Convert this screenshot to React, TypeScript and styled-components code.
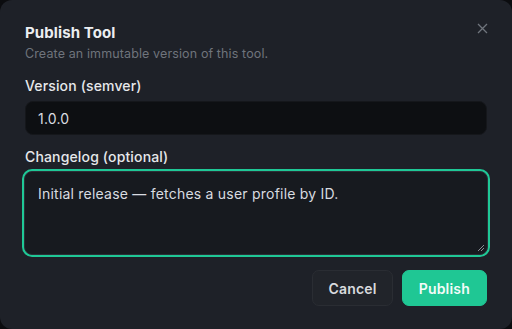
import React from "react";
import styled, { createGlobalStyle } from "styled-components";

const Global = createGlobalStyle`
  html, body { margin: 0; padding: 0; background: #0b0c0f; }
  body { font-family: Inter, "Noto Sans", sans-serif; -webkit-font-smoothing: antialiased; }
  * { box-sizing: border-box; }
`;

const Dialog = styled.div`
  position: relative;
  width: 512px;
  height: 329px;
  background: #1e2128;
  border-radius: 12px;
  padding: 22px 25px 24px 25px;
  display: flex;
  flex-direction: column;
`;

const Title = styled.h2`
  margin: 0;
  font-size: 15px;
  line-height: 22px;
  font-weight: 700;
  color: #eceef1;
  letter-spacing: 0.1px;
`;

const Subtitle = styled.p`
  margin: 1px 0 0;
  font-size: 12.5px;
  line-height: 18px;
  color: #6f747c;
  letter-spacing: 0.12px;
`;

const Close = styled.button`
  position: absolute;
  top: 20px;
  right: 22px;
  width: 16px;
  height: 16px;
  padding: 0;
  border: none;
  background: none;
  display: flex;
  align-items: center;
  justify-content: center;
`;

const Field = styled.div<{ $top: number }>`
  display: flex;
  flex-direction: column;
  margin-top: ${(p) => p.$top}px;
`;

const Label = styled.label`
  font-size: 14px;
  line-height: 20px;
  font-weight: 500;
  color: #e6e8eb;
  margin-bottom: 5px;
  letter-spacing: 0.15px;
`;

const Input = styled.div`
  height: 34px;
  border-radius: 8px;
  background: #0d0f12;
  border: 1px solid #15171b;
  padding: 0 12px;
  display: flex;
  align-items: center;
  font-size: 14px;
  color: #d9dce0;
  letter-spacing: 0.2px;
`;

const TextArea = styled.div`
  position: relative;
  margin: -1px -1px 0;
  height: 84px;
  border-radius: 8px;
  background: #171a1f;
  border: 1px solid #2b2f36;
  box-shadow: 0 0 0 2px #1fc896;
  padding: 11px 13px;
  font-size: 14px;
  line-height: 22px;
  color: #d9dce0;
  letter-spacing: 0.22px;
`;

const Grip = styled.svg`
  position: absolute;
  right: 2px;
  bottom: 2px;
`;

const Actions = styled.div`
  margin-top: 15px;
  display: flex;
  justify-content: flex-end;
  gap: 9px;
`;

const Button = styled.button<{ $primary?: boolean }>`
  height: 36px;
  padding: 0 ${(p) => (p.$primary ? 16 : 15)}px;
  border-radius: 7px;
  font-family: inherit;
  font-size: 14px;
  font-weight: 600;
  letter-spacing: 0.2px;
  color: ${(p) => (p.$primary ? "#f4fbf8" : "#d8dadd")};
  background: ${(p) => (p.$primary ? "#1fc794" : "#21242a")};
  border: 1px solid ${(p) => (p.$primary ? "#1fc794" : "#2a2d33")};
`;

export default function App() {
  return (
    <>
      <Global />
      <Dialog>
        <Title>Publish Tool</Title>
        <Subtitle>Create an immutable version of this tool.</Subtitle>
        <Close aria-label="Close">
          <svg width="11" height="11" viewBox="0 0 11 11">
            <path d="M1 1L10 10M10 1L1 10" stroke="#70757d" strokeWidth="1.3" />
          </svg>
        </Close>
        <Field $top={13}>
          <Label>Version (semver)</Label>
          <Input>1.0.0</Input>
        </Field>
        <Field $top={12}>
          <Label>Changelog (optional)</Label>
          <TextArea>
            Initial release — fetches a user profile by ID.
            <Grip width="8" height="8" viewBox="0 0 8 8">
              <path d="M7 1L1 7M7 4L4 7" stroke="#8a8f96" strokeWidth="1" />
            </Grip>
          </TextArea>
        </Field>
        <Actions>
          <Button>Cancel</Button>
          <Button $primary>Publish</Button>
        </Actions>
      </Dialog>
    </>
  );
}
